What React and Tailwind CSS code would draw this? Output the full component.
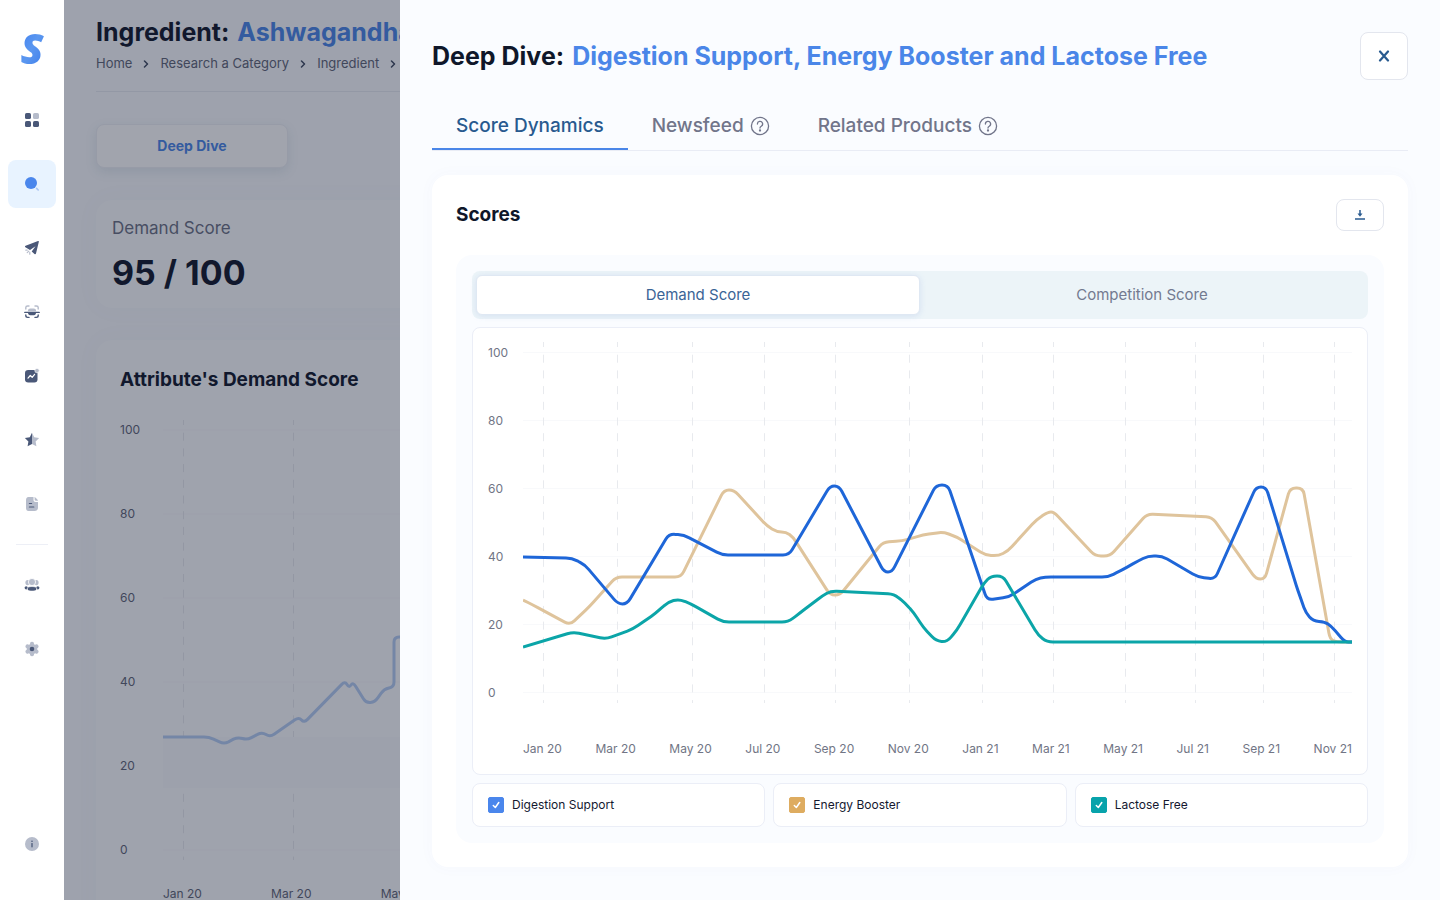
import React, { useState } from "react";

const MONTHS = ["Jan 20", "Mar 20", "May 20", "Jul 20", "Sep 20", "Nov 20", "Jan 21", "Mar 21", "May 21", "Jul 21", "Sep 21", "Nov 21"];
const TICKS = [100, 80, 60, 40, 20, 0];

const SERIES = [
  {
    name: "Energy Booster",
    color: "#dfc49c",
    points: [[523, 600], [533, 605], [570, 625], [590, 606], [616, 577], [681, 577], [724, 490], [734, 490], [767, 526], [777, 532], [786, 532], [793, 537], [830, 595], [840, 595], [883, 542], [902, 541], [923, 535], [943, 532], [957, 537], [985, 555], [998, 556], [1008, 551], [1036, 520], [1048, 512], [1054, 512], [1095, 556], [1110, 556], [1147, 514], [1212, 517], [1256, 579], [1265, 579], [1290, 488], [1303, 488], [1330, 639], [1336, 642], [1352, 642]],
  },
  {
    name: "Digestion Support",
    color: "#1e66d8",
    points: [[523, 557], [572, 558], [585, 565], [618, 604], [627, 604], [669, 534], [684, 535], [722, 555], [789, 555], [830, 486], [839, 486], [884, 572], [892, 572], [936, 485], [948, 485], [987, 600], [1009, 597], [1036, 579], [1045, 577], [1108, 577], [1122, 570], [1138, 561], [1148, 556], [1162, 556], [1198, 577], [1215, 579], [1256, 487], [1266, 487], [1298, 591], [1306, 613], [1313, 621], [1325, 622], [1331, 626], [1345, 642], [1352, 642]],
  },
  {
    name: "Lactose Free",
    color: "#0ba5a8",
    points: [[523, 647], [573, 632], [606, 639], [633, 629], [656, 613], [668, 602], [679, 599], [691, 604], [723, 622], [788, 622], [800, 613], [822, 596], [831, 591], [894, 594], [905, 603], [914, 613], [923, 627], [936, 641], [947, 642], [957, 630], [984, 583], [991, 576], [1003, 576], [1038, 635], [1047, 642], [1352, 642]],
  },
];

const ATTRIBUTE = [[163, 737], [209, 737], [224, 744], [238, 737], [247, 740], [262, 732], [270, 737], [299, 717], [304, 723], [345, 681], [349, 688], [353, 682], [366, 703], [375, 702], [384, 689], [394, 687], [394, 637], [420, 637], [1384, 637]];

const LEGEND = [
  ["Digestion Support", "border-[#4a86ec] bg-[#4a86ec]"],
  ["Energy Booster", "border-[#deac60] bg-[#deac60]"],
  ["Lactose Free", "border-[#08a3ab] bg-[#08a3ab]"],
];

// Polyline with each corner eased by a short quadratic curve.
function smooth(points, radius = 6) {
  let d = `M${points[0][0]} ${points[0][1]}`;
  for (let i = 1; i < points.length - 1; i++) {
    const [x, y] = points[i];
    const toward = ([px, py]) => {
      const len = Math.hypot(px - x, py - y);
      const k = Math.min(radius, len / 2) / len;
      return `${(x + (px - x) * k).toFixed(1)} ${(y + (py - y) * k).toFixed(1)}`;
    };
    d += `L${toward(points[i - 1])}Q${x} ${y} ${toward(points[i + 1])}`;
  }
  const last = points[points.length - 1];
  return `${d}L${last[0]} ${last[1]}`;
}

function Grid({ xs, ys, x1, x2, y1, y2 }) {
  return (
    <g>
      {ys.map((y) => <line key={y} x1={x1} x2={x2} y1={y} y2={y} stroke="#f8f9fb" />)}
      {xs.map((x) => <line key={x} x1={x} x2={x} y1={y1} y2={y2} stroke="#e8eaee" strokeDasharray="8 7.7" strokeDashoffset="3" />)}
    </g>
  );
}

const dark = "#4a5878";
const pale = "#b6bccb";

const ICONS = {
  Dashboard: (
    <>
      <rect x="1" y="1" width="6" height="6" rx="1.6" fill={dark} />
      <rect x="9" y="1" width="6" height="6" rx="1.6" fill={pale} />
      <rect x="1" y="9" width="6" height="6" rx="1.6" fill={dark} />
      <rect x="9" y="9" width="6" height="6" rx="1.6" fill={dark} />
    </>
  ),
  Research: (
    <>
      <circle cx="7" cy="7" r="6" fill="#4a86ec" />
      <path d="M12.600 12.400l1.600 1.600" stroke="#a9c5f3" strokeWidth="1.600" strokeLinecap="round" />
    </>
  ),
  Launch: (
    <>
      <path d="M14.900 1.600 12 13.600c-.2.8-1 .9-1.500.4L7.700 11.600 11.500 6.200 6 10 1.400 7.200c-.6-.4-.5-1.200.2-1.500L14 1c.6-.2 1 .1.900.600z" fill={dark} />
      <path d="M1.800 10.200h1.400M3.200 12.600l1.600-1.500M5.800 14.200v-1.800" stroke={pale} strokeWidth="1.200" strokeLinecap="round" />
    </>
  ),
  Scanner: (
    <>
      <path d="M1.800 5V3.600C1.800 2.500 2.500 2 3.600 2H5M11 2h1.400c1.100 0 1.800.5 1.800 1.600V5" fill="none" stroke={pale} strokeWidth="1.400" strokeLinecap="round" />
      <path d="M4 7.200V6.500C4 5.200 5 4.500 6.200 4.500h3.600C11 4.500 12 5.200 12 6.500v.7z" fill={pale} />
      <path d="M.8 8.400h14.400M1.800 11v.6c0 1.200.7 1.800 1.800 1.800H5M11 13.400h1.400c1.100 0 1.800-.6 1.800-1.800V11" fill="none" stroke={dark} strokeWidth="1.400" strokeLinecap="round" />
      <path d="M4 8.500h8c0 1.900-.8 2.700-2.200 2.700H6.200C4.800 11.200 4 10.400 4 8.500z" fill={dark} />
    </>
  ),
  Trends: (
    <>
      <rect x="1" y="2" width="12.500" height="12.500" rx="3.200" fill={dark} />
      <path d="M4 10.100l2.300-2.600 1.900 1.800 2.400-3" fill="none" stroke="#fff" strokeWidth="1.200" strokeLinecap="round" strokeLinejoin="round" />
      <circle cx="13" cy="2.600" r="2.200" fill={pale} stroke="#fff" strokeWidth=".6" />
    </>
  ),
  Favourites: (
    <>
      <path d="M8 .8l2.200 4.400 4.900.7-3.500 3.500.8 4.900L8 12z" fill={pale} />
      <path d="M8 .8L5.800 5.200l-4.900.7 3.500 3.500-.8 4.900L8 12z" fill={dark} />
    </>
  ),
  Reports: (
    <>
      <path d="M4.500 1h5v2.800c0 1.400.8 2.200 2.200 2.200H14v5.500c0 2.300-1.200 3.500-3.500 3.500h-6C2.700 15 2 13.800 2 11.500v-7C2 2.200 2.700 1 4.500 1z" fill={pale} />
      <path d="M10.600 1.400c0-.4.3-.5.600-.2L13.800 4c.3.400.1.800-.3.800h-1.700c-.8 0-1.200-.4-1.200-1.200z" fill={pale} />
      <path d="M5.400 7.500h2.200M5.400 11h4.400" stroke={dark} strokeWidth="1.200" strokeLinecap="round" />
    </>
  ),
  Team: (
    <>
      <ellipse cx="3.600" cy="5.600" rx="2.200" ry="2.700" fill={pale} />
      <ellipse cx="12.400" cy="5.600" rx="2.200" ry="2.700" fill={pale} />
      <circle cx="8" cy="5" r="3.600" fill={pale} stroke="#fff" strokeWidth=".8" />
      <circle cx="2.200" cy="10.800" r="1.600" fill={dark} />
      <circle cx="13.800" cy="10.800" r="1.600" fill={dark} />
      <ellipse cx="8" cy="11.800" rx="4.700" ry="2.300" fill={dark} stroke="#fff" strokeWidth=".6" />
    </>
  ),
  Settings: (
    <>
      <g fill={pale}>
        <circle cx="8" cy="8" r="5.300" />
        {[0, 60, 120].map((a) => <rect key={a} x="6" y=".8" width="4" height="14.400" rx="1.800" transform={`rotate(${a} 8 8)`} />)}
      </g>
      <circle cx="8" cy="8" r="2.300" fill={dark} />
    </>
  ),
  Information: (
    <>
      <circle cx="8" cy="8" r="7" fill={pale} />
      <path d="M8 7.600v3.200" stroke={dark} strokeWidth="1.300" strokeLinecap="round" />
      <circle cx="8" cy="5.300" r=".8" fill={dark} />
    </>
  ),
};

function NavButton({ name, active }) {
  return (
    <button type="button" aria-label={name} className={`flex size-12 items-center justify-center rounded-lg ${active ? "bg-[#e8f3ff]" : ""}`}>
      <svg viewBox="0 0 16 16" className="size-4">{ICONS[name]}</svg>
    </button>
  );
}

function Chevron() {
  return (
    <svg viewBox="0 0 8 8" className="size-2" fill="none" stroke="#3f4a61" strokeWidth="1.500" strokeLinecap="round" strokeLinejoin="round">
      <path d="M2.500 1l3 3-3 3" />
    </svg>
  );
}

function Help() {
  return (
    <svg viewBox="0 0 20 20" className="size-5" fill="none" stroke="currentColor" strokeWidth="1.300" strokeLinecap="round">
      <circle cx="10" cy="10" r="8.600" />
      <path d="M7.400 8a2.600 2.600 0 1 1 3.900 2.200c-.8.500-1.300.9-1.300 1.800" />
      <circle cx="10" cy="14.500" r=".5" fill="currentColor" />
    </svg>
  );
}

function Sidebar() {
  return (
    <nav className="flex w-16 shrink-0 flex-col items-center bg-white pb-8">
      <a href="#home" aria-label="Home" className="flex h-24 items-center font-['Open_Sans',sans-serif] text-[42px] leading-none font-extrabold italic">
        <span className="bg-gradient-to-br from-[#3f7ff0] via-[#5b97f0] to-[#3c7cea] bg-clip-text text-transparent">S</span>
      </a>
      <div className="flex flex-col gap-4">
        {["Dashboard", "Research", "Launch", "Scanner", "Trends", "Favourites", "Reports"].map((n) => <NavButton key={n} name={n} active={n === "Research"} />)}
      </div>
      <hr className="my-4 w-8 border-[#edeff6]" />
      <div className="flex flex-col gap-4">
        <NavButton name="Team" />
        <NavButton name="Settings" />
      </div>
      <div className="mt-auto"><NavButton name="Information" /></div>
    </nav>
  );
}

function IngredientPage() {
  return (
    <main className="min-w-0 flex-1 overflow-hidden bg-[#fafcff] px-8 pt-4">
      <h1 className="flex gap-2 text-[25px] leading-8 font-bold whitespace-nowrap text-[#0f172a]">
        Ingredient: <span className="text-[#4a86e8]">Ashwagandha</span>
      </h1>
      <div className="mt-[5px] flex items-center gap-2.5 border-b border-[#e8ebf2] pb-[17px] text-[13px] leading-[21px] whitespace-nowrap text-[#5f6577]">
        <a href="#home">Home</a><Chevron />
        <a href="#research">Research a Category</a><Chevron />
        <a href="#ingredient">Ingredient</a><Chevron />
      </div>
      <button type="button" className="mt-8 h-11 w-48 rounded-lg border border-[#eef0f6] bg-white text-sm font-bold text-[#4a86e8] shadow-[0_4px_12px_rgba(60,100,120,0.12)]">Deep Dive</button>
      <section className="mt-8 rounded-2xl bg-[#fcfdff] px-4 pt-4 pb-2.5 shadow-[0_0_24px_rgba(100,130,170,0.04)]">
        <p className="text-[17px] leading-6 text-[#6b7184]">Demand Score</p>
        <p className="mt-2 text-[34px] leading-[50px] font-bold text-[#0f172a]">95 / 100</p>
      </section>
      <section className="mt-8 rounded-2xl bg-[#fcfdff] p-6 shadow-[0_0_24px_rgba(100,130,170,0.04)]">
        <h2 className="text-[19px] leading-8 font-bold text-[#0f172a]">Attribute's Demand Score</h2>
        <div className="mt-6 flex text-xs text-[#5f6577]">
          <div className="flex h-[440px] w-[43px] shrink-0 flex-col justify-between leading-5">
            {TICKS.map((t) => <span key={t}>{t}</span>)}
          </div>
          <div className="min-w-0 flex-1">
            <svg viewBox="163 420 1221 440" preserveAspectRatio="none" className="h-[440px] w-full">
              <Grid xs={[183.5, 293.5, 403.5]} ys={[430, 514, 598, 682, 766, 850]} x1={163} x2={1384} y1={420} y2={860} />
              <path d="M163 737H1384V788H163z" fill="#f9fbfd" />
              <path d={smooth(ATTRIBUTE, 5)} fill="none" stroke="#b5cdf3" strokeWidth="3" />
            </svg>
            <div className="mt-6 flex justify-between leading-5 whitespace-nowrap">
              {MONTHS.map((m) => <span key={m}>{m}</span>)}
            </div>
          </div>
        </div>
      </section>
    </main>
  );
}

function ScoreChart({ shown }) {
  return (
    <div className="mt-2 flex rounded-lg border border-[#ebeef7] bg-white px-[15px] pt-[14px] pb-[15px] text-xs text-[#717585]">
      <div className="flex h-[361px] w-[35px] shrink-0 flex-col justify-between leading-[21px]">
        {TICKS.map((t) => <span key={t}>{t}</span>)}
      </div>
      <div className="min-w-0 flex-1">
        <svg viewBox="523 342 829 361" preserveAspectRatio="none" className="h-[361px] w-full" role="img" aria-label="Demand score by month">
          <Grid xs={[543.5, 617.5, 692.5, 764.5, 835.5, 909.5, 982.5, 1053.5, 1125.5, 1195.5, 1263.5, 1334.5]} ys={[352.5, 420.5, 488.5, 556.5, 624.5, 692.5]} x1={523} x2={1352} y1={342} y2={703} />
          {SERIES.filter((s) => shown[s.name]).map((s) => (
            <path key={s.name} d={smooth(s.points)} fill="none" stroke={s.color} strokeWidth="3" strokeLinejoin="round" />
          ))}
        </svg>
        <div className="mt-9 flex justify-between leading-5 whitespace-nowrap">
          {MONTHS.map((m) => <span key={m}>{m}</span>)}
        </div>
      </div>
    </div>
  );
}

function Drawer() {
  const [metric, setMetric] = useState("Demand Score");
  const [shown, setShown] = useState({ "Digestion Support": true, "Energy Booster": true, "Lactose Free": true });
  return (
    <aside role="dialog" aria-label="Deep Dive" className="absolute inset-y-0 right-0 left-[400px] overflow-hidden bg-[#fafcff] p-8">
      <header className="flex h-12 items-center justify-between">
        <h2 className="flex gap-2 text-[25px] leading-8 font-bold text-[#0f172a]">
          Deep Dive: <span className="text-[#4a86e8]">Digestion Support, Energy Booster and Lactose Free</span>
        </h2>
        <button type="button" aria-label="Close" className="flex size-12 items-center justify-center rounded-lg border border-[#e3e6ee] bg-white">
          <svg viewBox="0 0 12 12" className="size-3" fill="none" stroke="#285a8f" strokeWidth="2.200" strokeLinecap="round">
            <path d="M2 1.500l8 9M10 1.500l-8 9" />
          </svg>
        </button>
      </header>
      <div role="tablist" className="mt-6 flex border-b border-[#e9ecf5] text-[19px] font-medium whitespace-nowrap text-[#71758a]">
        <button type="button" role="tab" aria-selected="true" className="h-[46px] border-b-2 border-[#4a86e8] px-6 text-[#285a8f]">Score Dynamics</button>
        <button type="button" role="tab" aria-selected="false" className="flex h-[46px] items-center gap-1.5 border-b-2 border-transparent px-6">Newsfeed<Help /></button>
        <button type="button" role="tab" aria-selected="false" className="flex h-[46px] items-center gap-1.5 border-b-2 border-transparent px-6">Related Products<Help /></button>
      </div>
      <section className="mt-6 rounded-2xl bg-white p-6 shadow-[0_0_16px_rgba(80,100,180,0.03)]">
        <div className="flex items-center justify-between">
          <h3 className="text-[19px] leading-8 font-bold text-[#0f172a]">Scores</h3>
          <button type="button" aria-label="Download" className="flex h-8 w-12 items-center justify-center rounded-lg border border-[#e3e6ee] bg-white">
            <svg viewBox="0 0 12 12" className="size-3" fill="none" stroke="#285a8f">
              <path d="M6 1v4" strokeWidth="1.500" />
              <path d="M3.500 4.500h5L6 7.800z" fill="#285a8f" stroke="none" />
              <path d="M1 10h10" strokeWidth="1.500" />
            </svg>
          </button>
        </div>
        <div className="mt-6 rounded-2xl bg-[#fafcff] p-4">
          <div className="grid h-12 grid-cols-2 rounded-lg bg-[#ecf4f8] p-1 text-[15px]">
            {["Demand Score", "Competition Score"].map((m) => (
              <button key={m} type="button" onClick={() => setMetric(m)} className={m === metric ? "rounded-md border border-[#dfe8f3] bg-white text-[#3a6496] shadow-[0_1px_6px_rgba(120,150,220,0.2)]" : "rounded-md text-[#737a90]"}>{m}</button>
            ))}
          </div>
          <ScoreChart shown={shown} />
          <div className="mt-2 grid grid-cols-3 gap-2">
            {LEGEND.map(([name, box]) => (
              <label key={name} className="flex h-11 items-center gap-2 rounded-lg border border-[#ebeef7] bg-white px-[15px] text-xs text-[#14182f]">
                <span className="relative flex size-4">
                  <input type="checkbox" checked={shown[name]} onChange={() => setShown({ ...shown, [name]: !shown[name] })} className={`size-4 appearance-none rounded-xs border ${box}`} />
                  <svg viewBox="0 0 16 16" className="pointer-events-none absolute inset-0" fill="none" stroke="#fff" strokeWidth="1.500" strokeLinecap="round" strokeLinejoin="round">
                    <path d="M5.300 8.500l2 2 3.500-5" />
                  </svg>
                </span>
                {name}
              </label>
            ))}
          </div>
        </div>
      </section>
    </aside>
  );
}

export default function App() {
  return (
    <div className="relative flex h-screen overflow-hidden font-['Inter','Liberation_Sans',sans-serif]">
      <Sidebar />
      <IngredientPage />
      <div className="absolute inset-y-0 right-0 left-16 bg-[rgb(20,28,50)]/40" />
      <Drawer />
    </div>
  );
}
